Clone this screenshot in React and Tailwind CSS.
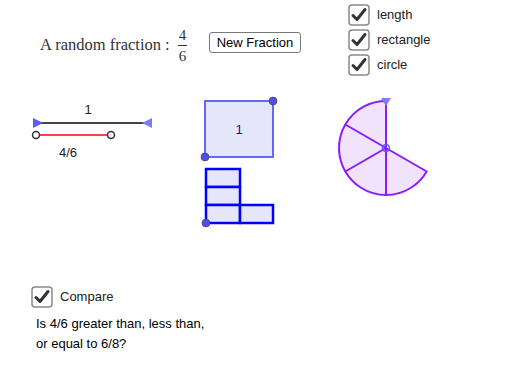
import React from 'react'

function Check() {
  return (
    <svg width="22" height="22" viewBox="0 0 22 22" className="shrink-0">
      <rect x="1" y="1" width="20" height="20" rx="3" fill="#fff" stroke="#8a8a8a" strokeWidth="1.5" />
      <path d="M5 11.5 L9 15.5 L17 5.5" fill="none" stroke="#333" strokeWidth="3" strokeLinecap="round" strokeLinejoin="round" />
    </svg>
  )
}

function CheckRow({ label }) {
  return (
    <div className="flex items-center gap-[7px] h-[24px]">
      <Check />
      <span className="text-[13px] text-[#222]">{label}</span>
    </div>
  )
}

// sector point helper for the circle model
const cx = 386, cy = 148, r = 47
const pt = deg => [cx + r * Math.cos(deg * Math.PI / 180), cy - r * Math.sin(deg * Math.PI / 180)]

export default function App() {
  const start = pt(90)
  const end = pt(330)
  const spokes = [150, 210, 270]

  return (
    <div className="relative w-[512px] h-[375px] bg-white overflow-hidden" style={{ fontFamily: '"Liberation Sans", Arial, sans-serif' }}>
      <svg className="absolute left-0 top-0" width="512" height="375">
        {/* length model */}
        <line x1="36" y1="123" x2="148" y2="123" stroke="#444" strokeWidth="2" />
        <polygon points="33,118 43,123 33,128" fill="#5c5cff" />
        <polygon points="152,118 142,123 152,128" fill="#7c7cff" />
        <text x="88" y="114" fontSize="13" textAnchor="middle" fill="#222" fontFamily="Liberation Sans, Arial, sans-serif">1</text>
        <line x1="36" y1="135" x2="111" y2="135" stroke="#ff4444" strokeWidth="2" />
        <circle cx="36" cy="135" r="3.5" fill="#fff" stroke="#333" strokeWidth="1.5" />
        <circle cx="111" cy="135" r="3.5" fill="#fff" stroke="#333" strokeWidth="1.5" />
        <text x="68" y="157" fontSize="13" textAnchor="middle" fill="#222" fontFamily="Liberation Sans, Arial, sans-serif">4/6</text>

        {/* rectangle model */}
        <rect x="205" y="101" width="68" height="56" fill="#e6e6fa" stroke="#6666ff" strokeWidth="2" />
        <text x="239" y="134" fontSize="13" textAnchor="middle" fill="#1a1a80" fontFamily="Liberation Sans, Arial, sans-serif">1</text>
        <circle cx="273" cy="101" r="4" fill="#5050e8" stroke="#333" strokeWidth="0.5" />
        <circle cx="205" cy="157" r="4" fill="#5050e8" stroke="#333" strokeWidth="0.5" />

        {[169, 187, 205].map(y => (
          <rect key={y} x="206" y={y} width="34" height="18" fill="#e6e6fa" stroke="#0000ff" strokeWidth="2.5" />
        ))}
        <rect x="240" y="205" width="33" height="18" fill="#e6e6fa" stroke="#0000ff" strokeWidth="2.5" />
        <circle cx="206" cy="223" r="4" fill="#5050e8" stroke="#333" strokeWidth="0.5" />

        {/* circle model */}
        <path
          d={`M${cx} ${cy} L${start[0]} ${start[1]} A${r} ${r} 0 1 0 ${end[0]} ${end[1]} Z`}
          fill="#f0e3fb" stroke="#8a1cff" strokeWidth="2" strokeLinejoin="round"
        />
        {spokes.map(a => {
          const p = pt(a)
          return <line key={a} x1={cx} y1={cy} x2={p[0]} y2={p[1]} stroke="#8a1cff" strokeWidth="2" />
        })}
        <circle cx={cx} cy={cy} r="3.5" fill="none" stroke="#5a5aff" strokeWidth="1.5" />
        <polygon points="381,98 391,98 386,106" fill="#7c7cff" />
      </svg>

      {/* title */}
      <div className="absolute left-[40px] top-[27px] flex items-center gap-[8px] text-[16.5px] text-[#333]" style={{ fontFamily: '"Liberation Serif", "Times New Roman", serif' }}>
        <span>A random fraction :</span>
        <span className="flex flex-col items-center leading-[16px] text-[15px]">
          <span className="px-[1px]">4</span>
          <span className="w-[9px] h-px bg-[#333] my-[2px]" />
          <span className="px-[1px]">6</span>
        </span>
      </div>

      <button className="absolute left-[209px] top-[32px] w-[92px] h-[21px] rounded-[3px] border border-[#777] bg-white text-[13px] text-black leading-none">
        New Fraction
      </button>

      <div className="absolute left-[348px] top-[3px] flex flex-col gap-px">
        <CheckRow label="length" />
        <CheckRow label="rectangle" />
        <CheckRow label="circle" />
      </div>

      <div className="absolute left-[31px] top-[285px]">
        <CheckRow label="Compare" />
      </div>
      <div className="absolute left-[36px] top-[314px] text-[13px] leading-[20px] text-black">
        <p>Is 4/6 greater than, less than,</p>
        <p>or equal to 6/8?</p>
      </div>
    </div>
  )
}
